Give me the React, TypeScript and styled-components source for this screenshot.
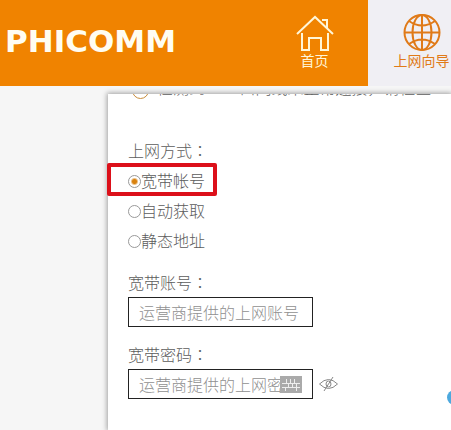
import React, { useState } from "react";
import styled, { createGlobalStyle } from "styled-components";

const Global = createGlobalStyle`
  * { box-sizing: border-box; }
  html { height: 100%; }
  body {
    margin: 0;
    min-height: 100%;
    overflow: hidden;
    background: #f6f6f6;
    color: #5c5c5c;
    font: 300 16px/24px "Noto Sans CJK SC", sans-serif;
  }
  button, input { font: inherit; color: inherit; }
`;

const Page = styled.div`
  display: flex;
  flex-direction: column;
  min-height: 100vh;
  overflow: hidden;
`;

const Header = styled.header`
  display: flex;
  height: 86px;
  background: #f08300;
`;

const Brand = styled.a`
  flex: 0 0 261px;
  padding: 21px 0 0 5px;
  color: #fffdf2;
  font: bold 31px/40px "DejaVu Sans", sans-serif;
  text-decoration: none;
`;

const Nav = styled.nav`
  display: flex;
  flex: 1;
`;

const NavItem = styled.button<{ $active?: boolean }>`
  display: flex;
  flex: 0 0 107px;
  flex-direction: column;
  align-items: center;
  padding: 13px 0 0;
  border: 0;
  background: ${(p) => (p.$active ? "#f0eff4" : "transparent")};
  color: ${(p) => (p.$active ? "#e07a18" : "#fff6d8")};
  font-size: 14px;
  font-weight: 400;
  line-height: 16px;
  white-space: nowrap;

  svg { display: block; }
`;

const Panel = styled.main`
  flex: 1;
  margin: 8px 0 0 108px;
  padding: 0 20px;
  background: #fff;
  box-shadow: 0 0 5px 1px rgba(0, 0, 0, 0.35);
`;

const Notice = styled.div`
  display: flex;
  align-items: flex-end;
  gap: 8px;
  height: 5px;
  padding-left: 4px;
  overflow: hidden;
  white-space: nowrap;

  svg { flex: none; }
`;

const Form = styled.form`
  padding-top: 39px;
`;

const Group = styled.fieldset`
  margin: 0;
  padding: 0;
  border: 0;
`;

const Legend = styled.legend`
  padding: 0;
  line-height: 24px;
  margin-bottom: 3px;
`;

const Colon = styled.span`
  font-family: "Noto Sans CJK TC", sans-serif;
`;

const Option = styled.label<{ $marked?: boolean }>`
  position: relative;
  display: flex;
  align-items: center;
  width: fit-content;
  height: 30px;

  ${(p) =>
    p.$marked &&
    `&::after {
      content: "";
      position: absolute;
      inset: -2px -12px -1px -21px;
      border: 4px solid #dc101a;
      border-radius: 2px;
      pointer-events: none;
    }`}
`;

const Radio = styled.input`
  appearance: none;
  width: 13px;
  height: 13px;
  margin: 3px 0 0;
  border: 1px solid #999;
  border-radius: 50%;
  background: #fff;

  &:checked {
    background: radial-gradient(circle, #d9820f 0 2px, #fff 4px);
  }
`;

const Field = styled.div`
  padding-top: 15px;
`;

const FieldLabel = styled.label`
  display: block;
  line-height: 24px;
  margin-bottom: 3px;
`;

const FieldRow = styled.div`
  display: flex;
  align-items: center;
  gap: 6px;
`;

const InputBox = styled.div`
  position: relative;
  width: 185px;
`;

const TextInput = styled.input`
  display: block;
  width: 100%;
  height: 30px;
  padding: 0 10px;
  border: 1px solid #222;
  border-radius: 0;
  background: #fff;
  outline: none;

  &::placeholder { color: #909090; opacity: 1; }
`;

const KeyboardButton = styled.button`
  position: absolute;
  top: 7px;
  right: 11px;
  padding: 0;
  border: 0;
  background: none;

  svg { display: block; }
`;

const EyeButton = styled.button`
  padding: 0;
  border: 0;
  background: none;

  svg { display: block; }
`;

const HelpDot = styled.button`
  position: fixed;
  right: -11px;
  bottom: 25px;
  width: 15px;
  height: 15px;
  padding: 0;
  border: 0;
  border-radius: 50%;
  background: #4da9de;
`;

const HomeIcon = () => (
  <svg width="38" height="39" viewBox="0 0 38 39" fill="none" stroke="currentColor" strokeWidth="2">
    <path d="M1 21 19 4l18 17M26 7h5v8M6 20v17h7V25h12v12h7V20" />
  </svg>
);

const GlobeIcon = () => (
  <svg width="38" height="39" viewBox="0 0 38 39" fill="none" stroke="currentColor" strokeWidth="2">
    <circle cx="19" cy="19.5" r="17.5" />
    <ellipse cx="19" cy="19.5" rx="9.5" ry="17.5" />
    <path d="M19 2v35M1 19.5h36M6 8q13 9 26 0M6 31q13-9 26 0" />
  </svg>
);

const NoticeIcon = () => (
  <svg width="17" height="17" viewBox="0 0 17 17" fill="none" stroke="#c98d3c">
    <circle cx="8.5" cy="8.5" r="8" />
  </svg>
);

const KeyboardIcon = () => (
  <svg width="22" height="17" viewBox="0 0 22 17">
    <path fill="#aaa" d="M0 0h22v17H0z" />
    <path
      stroke="#eee"
      fill="none"
      d="M2 7.500h18M2 11.500h18M6.500 3v4M10.500 3v4M14.500 3v4M8.500 8v3M12.500 8v3M16.500 8v3M5.500 12v3M16.500 12v3"
    />
  </svg>
);

const EyeIcon = () => (
  <svg width="19" height="16" viewBox="0 0 19 16" fill="none" stroke="#888">
    <path d="M.5 8Q9.500-1 18.500 8 9.500 17 .5 8zM14 1 5 15" />
    <ellipse cx="9.500" cy="8" rx="2.500" ry="3" />
  </svg>
);

const modes = ["宽带帐号", "自动获取", "静态地址"];

export default function App() {
  const [mode, setMode] = useState(modes[0]);

  return (
    <Page>
      <Global />
      <Header>
        <Brand href="#">PHICOMM</Brand>
        <Nav>
          <NavItem type="button"><HomeIcon />首页</NavItem>
          <NavItem type="button" $active><GlobeIcon />上网向导</NavItem>
        </Nav>
      </Header>
      <Panel>
        <Notice><NoticeIcon />检测到WAN口网线未正常连接，请检查</Notice>
        <Form>
          <Group>
            <Legend>上网方式<Colon>：</Colon></Legend>
            {modes.map((m, i) => (
              <Option key={m} $marked={i === 0}>
                <Radio type="radio" name="mode" checked={mode === m} onChange={() => setMode(m)} />
                {m}
              </Option>
            ))}
          </Group>
          <Field>
            <FieldLabel htmlFor="account">宽带账号<Colon>：</Colon></FieldLabel>
            <InputBox>
              <TextInput id="account" placeholder="运营商提供的上网账号" />
            </InputBox>
          </Field>
          <Field>
            <FieldLabel htmlFor="password">宽带密码<Colon>：</Colon></FieldLabel>
            <FieldRow>
              <InputBox>
                <TextInput id="password" type="password" placeholder="运营商提供的上网密码" />
                <KeyboardButton type="button" aria-label="软键盘"><KeyboardIcon /></KeyboardButton>
              </InputBox>
              <EyeButton type="button" aria-label="显示密码"><EyeIcon /></EyeButton>
            </FieldRow>
          </Field>
        </Form>
      </Panel>
      <HelpDot type="button" aria-label="帮助" />
    </Page>
  );
}
